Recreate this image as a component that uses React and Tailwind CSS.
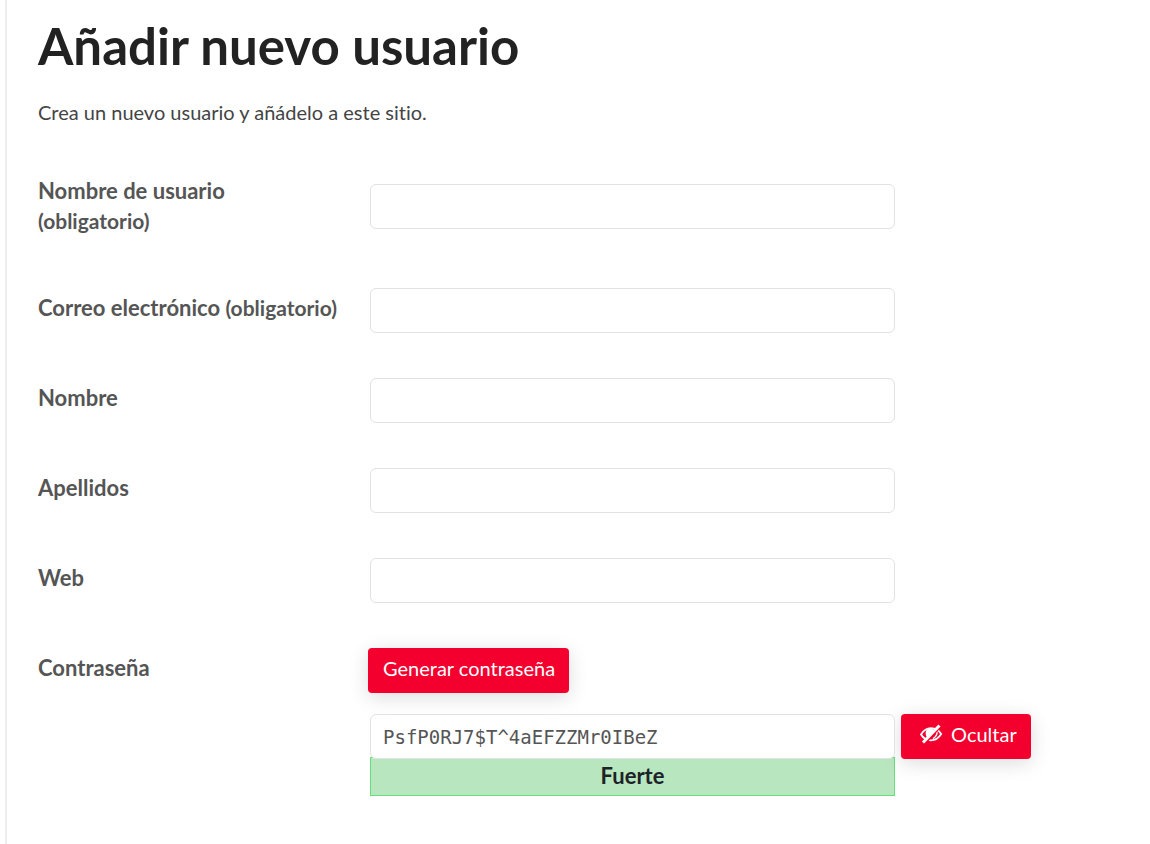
import { useState } from "react";

const fields = [
  { id: "user_login", label: "Nombre de usuario", required: true, type: "text", row: "mb-[52px]", stacked: true },
  { id: "email", label: "Correo electrónico", required: true, type: "email", row: "mb-[45px]" },
  { id: "first_name", label: "Nombre", required: false, type: "text", row: "mb-[45px]" },
  { id: "last_name", label: "Apellidos", required: false, type: "text", row: "mb-[45px]" },
  { id: "url", label: "Web", required: false, type: "url", row: "mb-[45px]" },
];

const inputClass =
  "block h-[45px] w-full max-w-[525px] rounded-md border border-[#e2e2e2] bg-white px-3 text-[19px] text-[#555] outline-none";

const buttonClass =
  "flex h-[45px] shrink-0 items-center rounded bg-[#f3002e] pr-[14px] pb-[6px] text-xl text-white shadow-[0_4px_20px_rgba(0,0,0,0.14)]";

const labelClass = "text-[22px] leading-[30px] font-bold text-[#555]";

function HiddenIcon() {
  return (
    <svg viewBox="0 0 24 20" className="mr-2 h-5 w-6" fill="none" aria-hidden="true">
      <path
        d="M2 10.500C5 5.600 8.200 4.200 12 4.200s7.500 1.700 10.200 5.800C19.200 14.800 16 16.300 12 16.300S4.800 15 2 10.500Z"
        stroke="currentColor"
        strokeWidth="1.800"
      />
      <path d="M7.300 6.200C10 4 14.500 4.500 16.500 7L10.500 14.800C7 14 5.800 9.500 7.300 6.200Z" fill="currentColor" />
      <path d="M17.200 6.200c1.500 3 .5 6.600-3.200 8.400" stroke="currentColor" strokeWidth="1.400" />
      <path d="M6 19.200 22 2" stroke="#f3002e" strokeWidth="2" />
      <path d="M4 18.500 20.500 1.500" stroke="currentColor" strokeWidth="3" />
    </svg>
  );
}

export default function App() {
  const [password, setPassword] = useState("PsfP0RJ7$T^4aEFZZMr0IBeZ");
  const [visible, setVisible] = useState(true);

  return (
    <main className="ml-[5px] min-h-screen border-l-2 border-[#eee] bg-white px-[31px] pt-4 pb-12 font-['Lato','Open_Sans',sans-serif] text-[#555] [font-variant-ligatures:none]">
      <h1 className="text-[51px] leading-[60px] font-bold text-[#222]">Añadir nuevo usuario</h1>
      <p className="mt-[21px] text-xl leading-[30px] text-[#444]">
        Crea un nuevo usuario y añádelo a este sitio.
      </p>

      <form className="mt-[49px]" onSubmit={(e) => e.preventDefault()}>
        {fields.map((f) => (
          <div key={f.id} className={`grid grid-cols-[332px_1fr] items-start ${f.row}`}>
            <label htmlFor={f.id} className={`${labelClass} ${f.stacked ? "" : "pt-[5px]"}`}>
              <span className={f.stacked ? "block" : ""}>{f.label}</span>{" "}
              {f.required && <span className="text-[21px]">(obligatorio)</span>}
            </label>
            <div className={f.stacked ? "pt-2" : ""}>
              <input id={f.id} name={f.id} type={f.type} className={inputClass} />
            </div>
          </div>
        ))}

        <div className="grid grid-cols-[330px_1fr] items-start">
          <label htmlFor="pass1" className={`${labelClass} pt-[5px]`}>
            Contraseña
          </label>
          <div>
            <button type="button" className={`${buttonClass} pl-[15px]`}>
              Generar contraseña
            </button>
            <div className="mt-[21px] ml-[2px] flex items-start gap-[6px]">
              <div className="w-full max-w-[525px]">
                <input
                  id="pass1"
                  type={visible ? "text" : "password"}
                  value={password}
                  onChange={(e) => setPassword(e.target.value)}
                  className={`${inputClass} relative font-['DejaVu_Sans_Mono',monospace]`}
                />
                <div className="-mt-[2px] h-[39px] border border-[#68de7c] bg-[#b8e6bf] text-center text-[22px] leading-[36px] font-bold text-[#1d2327]">
                  Fuerte
                </div>
              </div>
              <button type="button" className={`${buttonClass} pl-[18px]`} onClick={() => setVisible(!visible)}>
                <HiddenIcon />
                {visible ? "Ocultar" : "Mostrar"}
              </button>
            </div>
          </div>
        </div>
      </form>
    </main>
  );
}
